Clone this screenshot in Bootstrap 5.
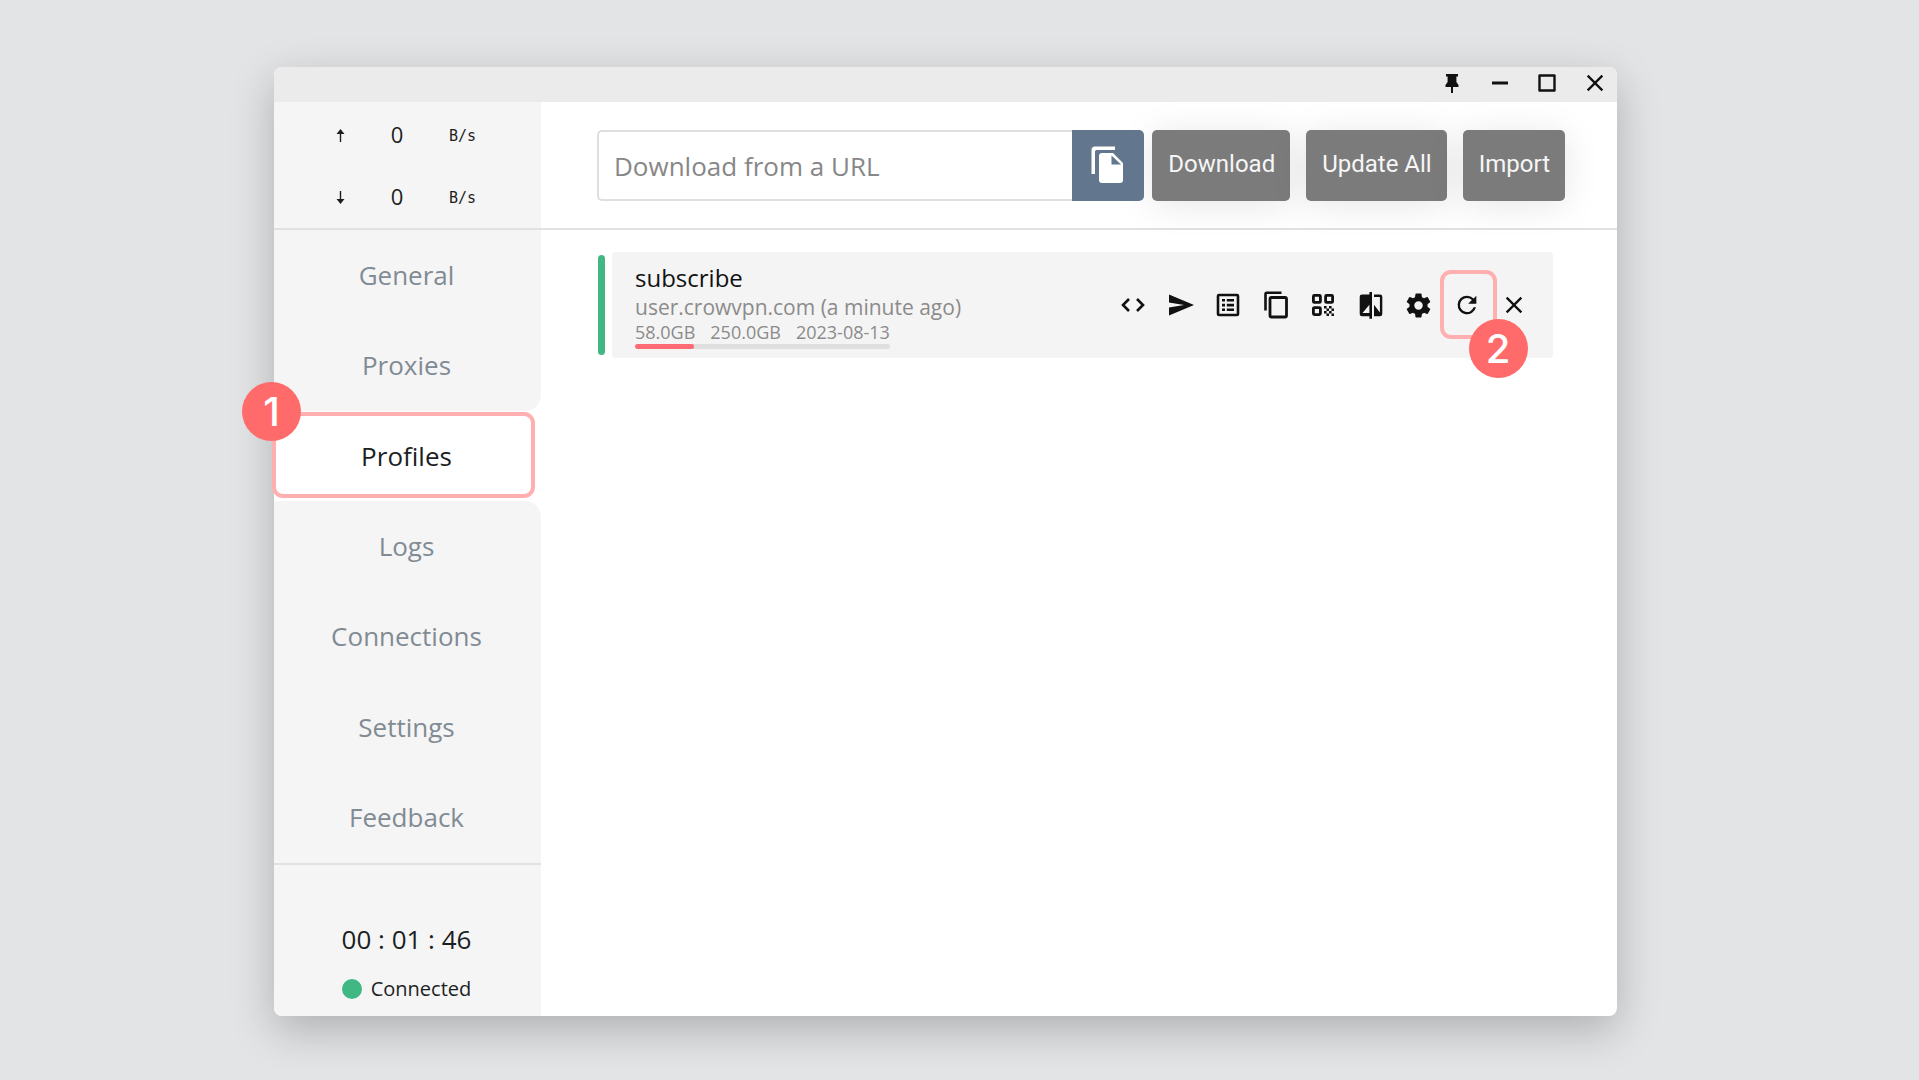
<!DOCTYPE html>
<html lang="en">
<head>
<meta charset="utf-8">
<meta name="viewport" content="width=device-width, initial-scale=1">
<title>Profiles</title>
<link href="https://cdn.jsdelivr.net/npm/bootstrap@5.3.0/dist/css/bootstrap.min.css" rel="stylesheet">
<style>
  body { background: #e3e4e6; font-family: "Open Sans", "Noto Sans", sans-serif; color: #1c1f22; padding: 67px 302px 64px 274px; }
  svg { display: block; fill: currentColor; }
  .app-window { border-radius: 8px; background: #fff; box-shadow: 0 14px 44px rgba(0, 0, 0, .23); }
  .title-bar { height: 35px; background: #ebebeb; border-radius: 8px 8px 0 0; padding: 0 8px 3px 0; color: #111; }
  .title-bar .btn { width: 28px; }
  .win-controls { width: 171px; }
  .bare { border: 0; padding: 0; color: #111; }
  .sidebar { width: 267px; }
  .shade { background: #f5f5f5; }
  .speed { height: 128px; border-bottom: 2px solid #dfe1e2; padding: 2px 65px 0 62px; }
  .speed-row { height: 62px; }
  .speed-arrow, .speed-unit { font-family: "DejaVu Sans Mono", monospace; font-size: 15px; padding-top: 2px; }
  .speed-num { font-size: 22px; padding-bottom: 2px; }
  .side-nav .nav-link { font-size: 26px; color: #818b94; background: #f5f5f5; padding: 0 2px 0 0; border-radius: 0; min-height: 56px; }
  .side-nav .nav-link.active { background: #fff; color: #1c1f22; }
  .side-nav .before-active { border-bottom-right-radius: 16px; }
  .side-nav .after-active { border-top-right-radius: 16px; }
  .status { height: 153px; border-top: 2px solid #dfe1e2; border-radius: 0 0 0 8px; padding: 54px 2px 0 0; }
  .timer { font-size: 26px; line-height: 40px; }
  .state { font-size: 20px; line-height: 28px; margin-top: 16px; gap: 9px; }
  .state-dot { width: 20px; height: 20px; border-radius: 50%; background: #41b883; }
  .toolbar { height: 128px; border-bottom: 2px solid #dfe1e2; padding: 0 52px 0 56px; gap: 16px; }
  .url-group { height: 71px; margin-right: -8px; }
  .url-group .form-control { border: 2px solid #dedfe0; border-right: 0; border-radius: 5px 0 0 5px; font-size: 26px; padding: 2px 15px 0; }
  .url-group .form-control::placeholder { color: #878787; }
  .btn-paste { width: 72px; background: #62778d; color: #fff; border: 0; border-radius: 0 5px 5px 0; padding: 0 0 0 18px; }
  .btn-tool { height: 71px; border: 0; border-radius: 5px; background: #7b7b7b; color: #f6f6f6; font-family: Roboto, sans-serif; font-size: 24px; padding: 0 15px 2px 16px; white-space: nowrap; box-shadow: 0 4px 36px rgba(0, 0, 0, .1); }
  .btn-tool:hover, .btn-paste:hover { background: #6d6d6d; color: #fff; }
  .profile-list { padding: 22px 64px 0 57px; }
  .profile-mark { width: 7px; margin: 3px 0; border-radius: 4px; background: #41b883; }
  .profile-item { gap: 7px; }
  .profile-card { background: #f4f4f4; border-radius: 4px; height: 106px; padding: 0 25px 0 23px; }
  .profile-name { font-size: 24px; line-height: 32px; color: #111; }
  .profile-host { font-size: 21px; line-height: 26px; color: #8b8b8b; }
  .usage { font-size: 18px; line-height: 24px; color: #8b8b8b; gap: 15px; }
  .usage-bar { height: 5px; border-radius: 2px; background: #e0dfdf; }
  .usage-bar .progress-bar { background: #ff6b75; border-radius: 2px; }
  .actions { width: 409px; }
  .callout { position: absolute; border: 4px solid #ffafaf; border-radius: 11px; pointer-events: none; }
  .step { position: absolute; width: 59px; height: 59px; border-radius: 50%; background: #ff6b6b; color: #fff; font: 500 40px/59px Inter, sans-serif; text-align: center; pointer-events: none; }
  .callout-nav { inset: 1px 6px 3px -2px; }
  .step-nav { left: -32px; top: -29px; }
  .callout-update { inset: -21px -16px -20px -13px; }
  .step-update { left: 16px; top: 28px; }
</style>
<script src="https://cdn.jsdelivr.net/npm/bootstrap@5.3.0/dist/js/bootstrap.bundle.min.js"></script>
</head>
<body class="min-vh-100 d-flex">
<div class="app-window flex-fill d-flex flex-column">
  <header class="title-bar d-flex justify-content-end align-items-center">
    <div class="win-controls d-flex justify-content-between align-items-center">
      <button class="btn bare d-flex justify-content-center" type="button" aria-label="Pin"><svg width="20" height="22" viewBox="0 0 20 22"><path d="M4 2h12v2.500h-1.600V10l2.100 3v2H11v6H9v-6H3.500v-2l2.100-3V4.500H4z"/></svg></button>
      <button class="btn bare d-flex justify-content-center" type="button" aria-label="Minimize"><svg width="28" height="28" viewBox="0 0 28 28"><path d="M6 12.500h16v3H6z"/></svg></button>
      <button class="btn bare d-flex justify-content-center" type="button" aria-label="Maximize"><svg width="28" height="28" viewBox="0 0 28 28"><path fill="none" stroke="currentColor" stroke-width="2.400" stroke-linejoin="round" d="M6.500 6.500h15v15h-15z"/></svg></button>
      <button class="btn bare d-flex justify-content-center" type="button" aria-label="Close"><svg width="28" height="28" viewBox="0 0 24 24"><path d="M19 6.400 17.600 5 12 10.600 6.400 5 5 6.400 10.600 12 5 17.600 6.400 19 12 13.400 17.600 19 19 17.600 13.400 12z"/></svg></button>
    </div>
  </header>
  <div class="d-flex flex-fill">
    <aside class="sidebar flex-shrink-0 d-flex flex-column">
      <div class="speed shade">
        <div class="speed-row d-flex align-items-center justify-content-between"><span class="speed-arrow"><svg width="9" height="14" viewBox="0 0 9 14"><path d="M4.500 0 8.500 5H5.200v8H3.800V5H.5z"/></svg></span><span class="speed-num">0</span><span class="speed-unit">B/s</span></div>
        <div class="speed-row d-flex align-items-center justify-content-between"><span class="speed-arrow"><svg width="9" height="14" viewBox="0 0 9 14"><path d="M4.500 13 .5 8h3.300V0h1.400v8h3.300z"/></svg></span><span class="speed-num">0</span><span class="speed-unit">B/s</span></div>
      </div>
      <nav class="side-nav nav flex-column flex-nowrap flex-fill">
        <a class="nav-link flex-fill d-flex align-items-center justify-content-center" href="#">General</a>
        <a class="nav-link flex-fill d-flex align-items-center justify-content-center before-active" href="#">Proxies</a>
        <a class="nav-link flex-fill d-flex align-items-center justify-content-center active position-relative" href="#" aria-current="page">Profiles<span class="callout callout-nav"></span><span class="step step-nav">1</span></a>
        <a class="nav-link flex-fill d-flex align-items-center justify-content-center after-active" href="#">Logs</a>
        <a class="nav-link flex-fill d-flex align-items-center justify-content-center" href="#">Connections</a>
        <a class="nav-link flex-fill d-flex align-items-center justify-content-center" href="#">Settings</a>
        <a class="nav-link flex-fill d-flex align-items-center justify-content-center" href="#">Feedback</a>
      </nav>
      <div class="status shade">
        <div class="timer text-center">00 : 01 : 46</div>
        <div class="state d-flex align-items-center justify-content-center"><span class="state-dot"></span>Connected</div>
      </div>
    </aside>
    <main class="flex-fill">
      <form class="toolbar d-flex align-items-center">
        <div class="url-group input-group flex-nowrap flex-fill">
          <input class="form-control" type="text" placeholder="Download from a URL" aria-label="Download from a URL">
          <button class="btn btn-paste" type="button" aria-label="Paste"><svg width="36" height="40" viewBox="0 0 36 40"><path d="M25 1.500v3.500H6.500q-1.500 0-1.500 1.500V29H1.500V5q0-3.500 3.500-3.500z"/><path fill-rule="evenodd" d="M12 8h11l10 10v17q0 3-3 3H12q-3 0-3-3V11q0-3 3-3zm9.500 2.500V19.500H31z"/></svg></button>
        </div>
        <button class="btn btn-tool" type="button">Download</button>
        <button class="btn btn-tool" type="button">Update All</button>
        <button class="btn btn-tool" type="button">Import</button>
      </form>
      <section class="profile-list">
        <article class="profile-item d-flex">
          <div class="profile-mark"></div>
          <div class="profile-card flex-fill d-flex align-items-center justify-content-between">
            <div>
              <div class="profile-name">subscribe</div>
              <div class="profile-host">user.crowvpn.com (a minute ago)</div>
              <div class="d-inline-block align-top">
                <div class="usage d-flex"><span>58.0GB</span><span>250.0GB</span><span>2023-08-13</span></div>
                <div class="progress usage-bar" role="progressbar" aria-label="Traffic used" aria-valuenow="23" aria-valuemin="0" aria-valuemax="100"><div class="progress-bar" style="width:23.2%"></div></div>
              </div>
            </div>
            <div class="actions d-flex justify-content-between align-items-center">
              <button class="btn bare" type="button" aria-label="Edit as text"><svg width="28" height="28" viewBox="0 0 28 28"><path fill="none" stroke="currentColor" stroke-width="2.600" d="M10 8 4 14l6 6M18 8l6 6-6 6"/></svg></button>
              <button class="btn bare" type="button" aria-label="Upload"><svg width="28" height="28" viewBox="0 0 28 28"><path d="M2 3.500 27 14 2 24.500V16.500L17 14 2 11.500z"/></svg></button>
              <button class="btn bare" type="button" aria-label="Proxies"><svg width="28" height="28" viewBox="0 0 28 28"><rect x="4" y="4" width="20" height="20" rx="1" fill="none" stroke="currentColor" stroke-width="2.600"/><path d="M8 8h3v2.600H8zm4.800 0H20v2.600h-7.200zM8 12.800h3v2.600H8zm4.800 0H20v2.600h-7.200zM8 17.500h3v2.600H8zm4.800 0H20v2.600h-7.200z"/></svg></button>
              <button class="btn bare" type="button" aria-label="Duplicate"><svg width="28" height="28" viewBox="0 0 28 28"><rect x="8" y="6.500" width="16.500" height="19.500" rx="1.500" fill="none" stroke="currentColor" stroke-width="2.800"/><path d="M19.500 .5V3H4.800V19.500H2.200V3Q2.200 .5 4.700 .5z"/></svg></button>
              <button class="btn bare" type="button" aria-label="QR code"><svg width="28" height="28" viewBox="0 0 28 28"><g fill="none" stroke="currentColor" stroke-width="2.800"><rect x="4.400" y="4.400" width="7" height="7" rx="1"/><rect x="16.600" y="4.400" width="7" height="7" rx="1"/><rect x="4.400" y="16.600" width="7" height="7" rx="1"/></g><path d="M15 15h2.600v2.600H15zm5 0h2.600v2.600H20zm-2.500 2.600h2.500v2.500h-2.500zm5 0H25v2.500h-2.500zM15 20h2.600v2.600H15zm5 0h2.600v2.600H20zm-2.500 2.600h2.500V25h-2.500zm5 0H25V25h-2.500z"/></svg></button>
              <button class="btn bare" type="button" aria-label="Compare"><svg width="28" height="28" viewBox="0 0 28 28"><path d="M12.400 1v2.500H5Q2.700 3.500 2.700 5.800V23Q2.700 25.200 5 25.200h7.400V27.700H15V1zM5.500 22l6.900-8.200V22z" fill-rule="evenodd"/><path d="M17 3.500h6q2.300 0 2.300 2.300V23q0 2.200-2.300 2.200h-6V13.800l5.900 7.700V6H17z"/></svg></button>
              <button class="btn bare" type="button" aria-label="Settings"><svg width="29" height="29" viewBox="0 0 24 24"><path d="M12 15.500A3.500 3.500 0 0 1 8.500 12 3.500 3.500 0 0 1 12 8.500a3.500 3.500 0 0 1 3.500 3.500 3.500 3.500 0 0 1-3.500 3.500m7.430-2.530c.04-.32.07-.64.07-.97s-.03-.66-.07-1l2.110-1.630c.19-.15.24-.42.12-.64l-2-3.460c-.12-.22-.39-.31-.61-.22l-2.490 1c-.52-.39-1.060-.73-1.690-.98l-.37-2.650A.506.506 0 0 0 14 2h-4c-.25 0-.46.18-.5.420l-.37 2.650c-.63.25-1.170.59-1.690.98l-2.490-1c-.22-.09-.49 0-.61.22l-2 3.460c-.13.22-.07.49.12.64L4.570 11c-.04.34-.07.67-.07 1s.03.65.07.97l-2.110 1.660c-.19.15-.25.42-.12.64l2 3.460c.12.22.39.3.61.22l2.490-1.010c.52.4 1.060.74 1.690.99l.37 2.650c.04.24.25.42.5.420h4c.25 0 .46-.18.5-.42l.37-2.650c.63-.26 1.170-.59 1.690-.99l2.490 1.010c.22.08.49 0 .61-.22l2-3.460c.12-.22.07-.49-.12-.64z"/></svg></button>
              <button class="btn bare position-relative" type="button" aria-label="Update"><svg width="28" height="28" viewBox="0 0 24 24"><path d="M17.650 6.350A7.960 7.960 0 0 0 12 4a8 8 0 1 0 7.730 10h-2.080A6 6 0 1 1 12 6c1.660 0 3.140.69 4.220 1.780L13 11h7V4z"/></svg><span class="callout callout-update"></span><span class="step step-update">2</span></button>
              <button class="btn bare" type="button" aria-label="Delete"><svg width="28" height="28" viewBox="0 0 24 24"><path d="M19 6.400 17.600 5 12 10.600 6.400 5 5 6.400 10.600 12 5 17.600 6.400 19 12 13.400 17.600 19 19 17.600 13.400 12z"/></svg></button>
            </div>
          </div>
        </article>
      </section>
    </main>
  </div>
</div>
</body>
</html>
